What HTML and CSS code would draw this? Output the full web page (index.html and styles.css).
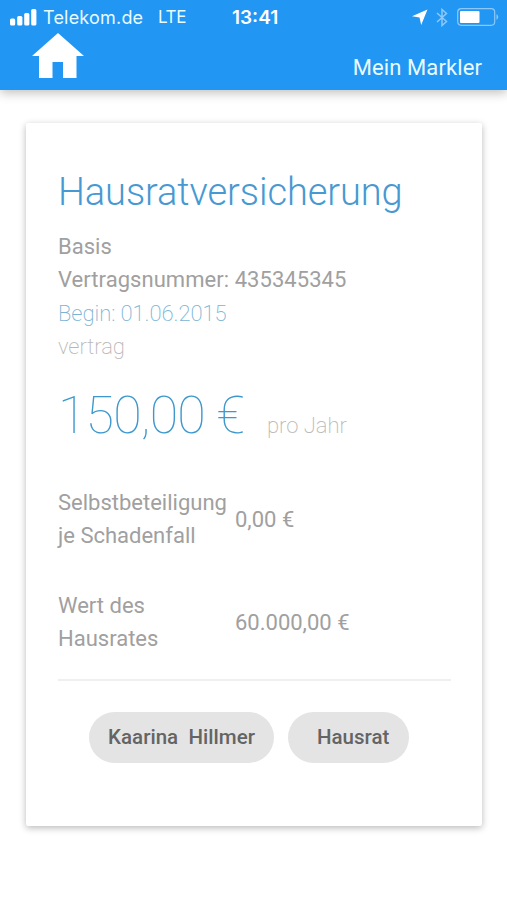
FILE: index.html
```html
<!DOCTYPE html>
<html lang="de">
<head>
<meta charset="utf-8">
<title>Mein Markler</title>
<link rel="stylesheet" href="styles.css">
</head>
<body>
<header class="header">
  <div class="status">
    <svg class="signal" width="27" height="17" viewBox="0 0 27 17" fill="#fff"><rect x="0" y="9.500" width="5.200" height="7" rx="1.500"/><rect x="7.200" y="7" width="5.200" height="9.500" rx="1.500"/><rect x="14.200" y="4" width="5.200" height="12.500" rx="1.500"/><rect x="21.200" y="0" width="5.200" height="16.500" rx="1.500"/></svg>
    <span class="carrier">Telekom.de</span>
    <span class="network">LTE</span>
    <span class="clock">13:41</span>
    <svg class="location" width="16" height="16" viewBox="0 0 16 16"><path d="M15.500 .5L0 7.300l7.500 1.200L9.200 16z" fill="#fff"/></svg>
    <svg class="bluetooth" width="12" height="19" viewBox="0 0 12 19"><path d="M1 5l9.500 8.500L6 17.500v-16l4.500 4L1 14" fill="none" stroke="#8dc8fa" stroke-width="1.500"/></svg>
    <svg class="battery" width="43" height="18" viewBox="0 0 43 18"><rect x=".7" y=".7" width="37" height="16.600" rx="3.500" fill="none" stroke="#8dc8fa" stroke-width="1.200"/><rect x="3" y="3" width="19.500" height="12" rx="1" fill="#fff"/><path d="M39.500 6q3.500 3 0 6z" fill="#8dc8fa"/></svg>
  </div>
  <div class="toolbar">
    <svg class="home" width="52" height="45" viewBox="0 0 52 45"><path d="M26 0L0 23h7v22h13.500V29h10.500v16h13.500V23H52z" fill="#fff"/></svg>
    <span class="brand">Mein Markler</span>
  </div>
</header>
<main class="card">
  <h1>Hausratversicherung</h1>
  <p class="line">Basis</p>
  <p class="line number">Vertragsnummer: 435345345</p>
  <p class="line begin">Begin: 01.06.2015</p>
  <p class="line muted">vertrag</p>
  <div class="price"><span class="amount">150,00 €</span><span class="period">pro Jahr</span></div>
  <dl class="details">
    <dt>Selbstbeteiligung<br>je Schadenfall</dt><dd>0,00 €</dd>
    <dt>Wert des<br>Hausrates</dt><dd>60.000,00 €</dd>
  </dl>
  <div class="chips"><span class="chip person">Kaarina&nbsp; Hillmer</span><span class="chip category">Hausrat</span></div>
</main>
</body>
</html>
```
FILE: styles.css
```css
* { box-sizing: border-box; }
body { margin: 0; height: 900px; overflow: hidden; background: #fff; font-family: Roboto, sans-serif; font-size: 22px; color: #a0a0a0; }
.header { height: 90px; background: #2196f3; color: #e8fbff; box-shadow: 0 3px 10px rgba(0,0,0,.25); }
.status { height: 33px; display: flex; align-items: center; padding: 1px 7px 0 10px; font-family: Inter, sans-serif; font-size: 18px; }
.signal, .location, .bluetooth, .battery { flex: none; }
.carrier { margin-left: 6px; width: 115px; white-space: nowrap; letter-spacing: .2px; }
.network { width: 74px; font-size: 17px; letter-spacing: -.4px; }
.clock { font-weight: 600; width: 180px; font-size: 19px; color: #fff; }
.bluetooth { margin-left: 8px; }
.battery { margin-left: 9px; }
.toolbar { display: flex; justify-content: space-between; padding: 0 25px 0 32px; }
.brand { margin-top: 22px; line-height: 26px; letter-spacing: .1px; }
.card { margin: 33px 25px 0 26px; height: 703px; padding: 44px 31px 0 32px; box-shadow: 0 2px 7px rgba(0,0,0,.28); border-radius: 2px; }
h1 { margin: 0 0 13px; font-weight: 300; font-size: 38px; line-height: 51px; letter-spacing: -.08px; color: #4699d2; white-space: nowrap; }
h1 + .line { margin-top: -1px; }
.line { margin: 0; line-height: 33.300px; white-space: nowrap; }
.number { letter-spacing: .05px; }
.begin { font-weight: 200; letter-spacing: -.06px; color: #79b4d6; }
.muted { font-weight: 200; letter-spacing: -.06px; color: #b8b8b8; }
.price { display: flex; align-items: baseline; margin-top: 17px; height: 70px; white-space: nowrap; }
.amount { width: 209px; font-size: 52px; line-height: 72px; font-weight: 150; letter-spacing: -.85px; color: #3c98cd; }
.period { font-weight: 200; color: #b8b8b8; }
.details { display: grid; grid-template-columns: 177px 1fr; row-gap: 36px; align-items: center; margin: 36px 0 0; padding-bottom: 24px; border-bottom: 2px solid #efefef; line-height: 33.300px; }
dt { white-space: nowrap; }
dd { margin: 0; padding-top: 1px; }
.chips { display: flex; gap: 14px; margin: 31px 0 0 31px; }
.chip { height: 51px; border-radius: 26px; background: #e4e4e4; color: #646464; font-weight: 500; font-size: 20.500px; line-height: 51px; white-space: nowrap; }
.person { width: 185px; padding-left: 19px; letter-spacing: .03px; }
.category { width: 121px; padding-left: 29px; }
```
